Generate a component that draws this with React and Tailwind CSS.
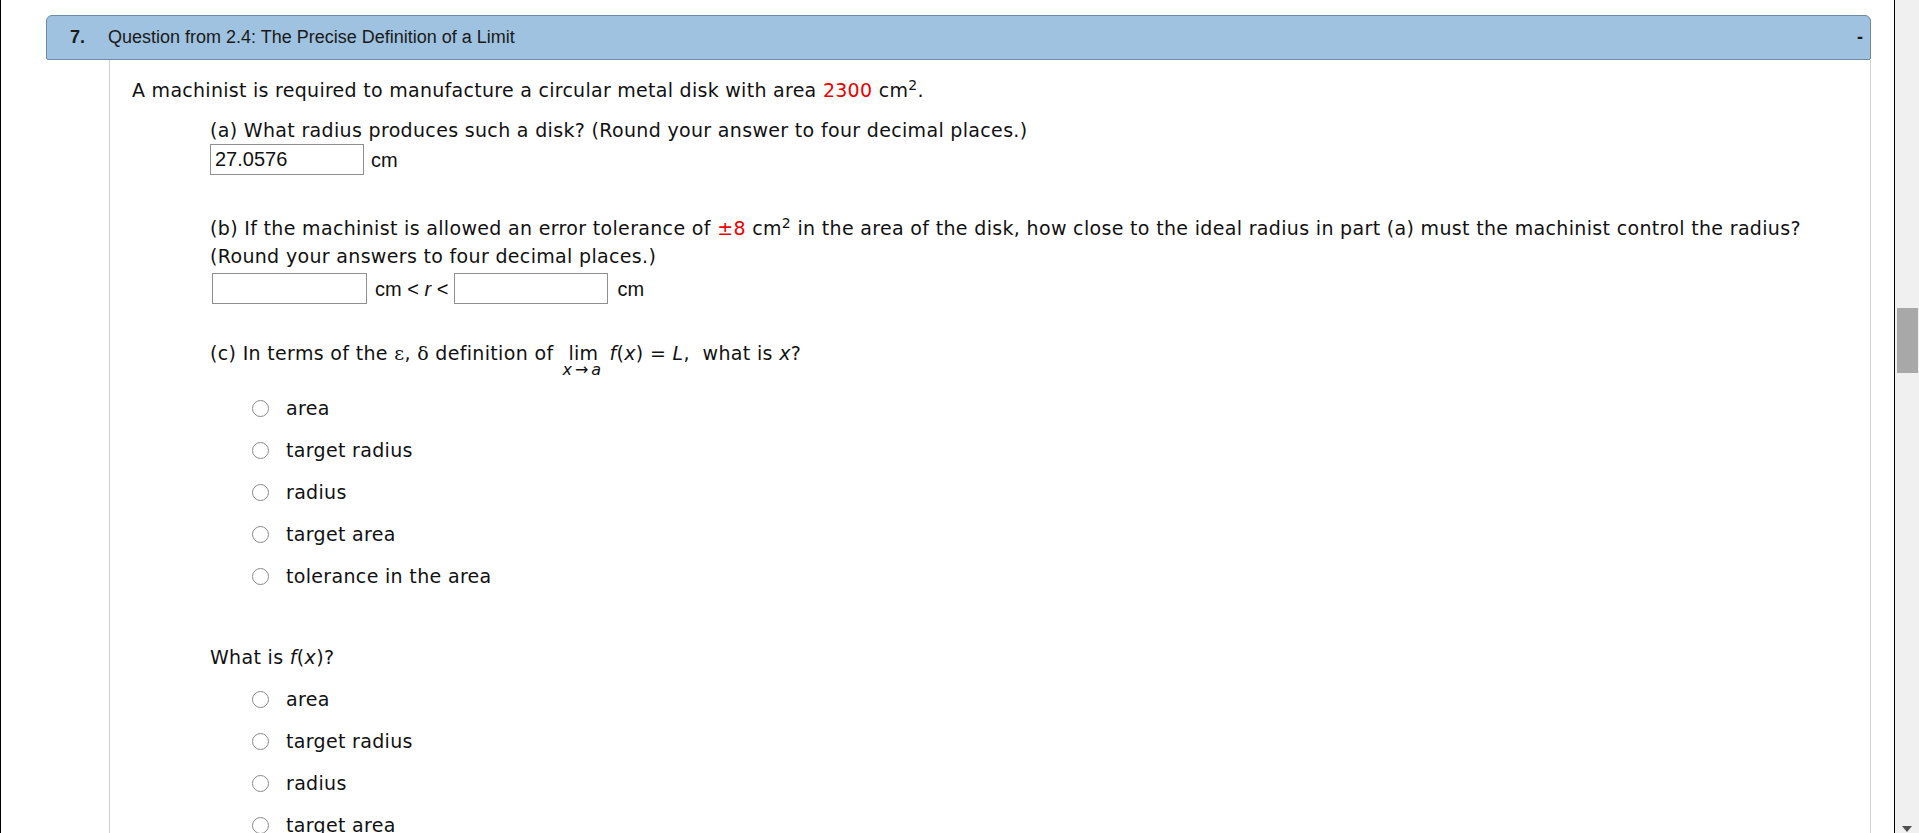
import React from "react";

const choices = ["area", "target radius", "radius", "target area", "tolerance in the area"];

function Radio({ label }) {
  return (
    <div className="flex h-[42px] items-center">
      <span className="ml-[42px] h-[17px] w-[17px] rounded-full border border-[#8a8a8a] bg-white" />
      <span className="ml-[17px]">{label}</span>
    </div>
  );
}

export default function App() {
  return (
    <div className="flex h-[833px] w-full overflow-hidden border-l border-black bg-white text-[#111]">
      <div className="flex min-w-0 flex-1 flex-col pt-[15px] pl-[45px] pr-[23px]">
        {/* question header */}
        <div className="flex h-[45px] shrink-0 items-center rounded-t-[6px] rounded-b-[2px] border border-[#6f8aa6] bg-[#9ec2df] font-['Liberation_Sans',Arial,sans-serif] text-[18px] text-[#1a1a1a]">
          <span className="ml-[23px] w-[38px] font-bold">7.</span>
          <span>Question from 2.4: The Precise Definition of a Limit</span>
          <span className="ml-auto mr-[7px] font-bold">-</span>
        </div>

        {/* question body */}
        <div className="ml-[63px] flex-1 border-x border-[#cfcfcf] pt-[16px] pl-[22px] font-['DejaVu_Sans',Verdana,sans-serif] text-[19px] leading-[28px] tracking-[0.33px]">
          <p className="tracking-[0.28px]">
            A machinist is required to manufacture a circular metal disk with area{" "}
            <span className="text-[#ee0000]">2300</span> cm<sup className="text-[14px]">2</sup>.
          </p>

          <div className="ml-[78px]">
            <p className="mt-[12px]">(a) What radius produces such a disk? (Round your answer to four decimal places.)</p>
            <div className="flex h-[31px] items-center font-['Liberation_Sans',Arial,sans-serif] text-[20px] tracking-normal">
              <input
                readOnly
                value="27.0576"
                className="h-[31px] w-[154px] border border-[#8f8f8f] bg-white px-[4px] text-[20px] outline-none"
              />
              <span className="ml-[7px]">cm</span>
            </div>

            <p className="mt-[39px]">
              (b) If the machinist is allowed an error tolerance of{" "}
              <span className="text-[#ee0000]">±8</span> cm<sup className="text-[14px]">2</sup> in the area of the
              disk, how close to the ideal radius in part (a) must the machinist control the radius?
            </p>
            <p>(Round your answers to four decimal places.)</p>
            <div className="mt-[3px] flex h-[31px] items-center font-['Liberation_Sans',Arial,sans-serif] text-[20px] tracking-normal">
              <input readOnly className="ml-[2px] h-[31px] w-[155px] border border-[#8f8f8f] bg-white outline-none" />
              <span className="ml-[8px] mr-[6px]">
                cm &lt; <i>r</i> &lt;
              </span>
              <input readOnly className="h-[31px] w-[154px] border border-[#8f8f8f] bg-white outline-none" />
              <span className="ml-[9px]">cm</span>
            </div>

            <p className="mt-[35px] h-[28px] whitespace-nowrap">
              (c) In terms of the <span className="font-['DejaVu_Serif',serif]">ε</span>,{" "}
              <span className="font-['DejaVu_Serif',serif]">δ</span> definition of
              <span className="relative ml-[15px] mr-[11px] inline-block">
                lim
                <span className="absolute left-[-6px] top-[23px] whitespace-nowrap text-[16px] leading-[16px] tracking-normal">
                  <i>x</i>
                  <span className="mx-[3px]">→</span>
                  <i>a</i>
                </span>
              </span>
              <i>f</i>(<i>x</i>) = <i>L</i>,&nbsp; what is <i>x</i>?
            </p>

            <div className="mt-[20px]">
              {choices.map((c) => (
                <Radio key={"x" + c} label={c} />
              ))}
            </div>

            <p className="mt-[46px]">
              What is <i>f</i>(<i>x</i>)?
            </p>
            <div className="mt-[7px]">
              {choices.map((c) => (
                <Radio key={"f" + c} label={c} />
              ))}
            </div>
          </div>
        </div>
      </div>

      {/* scrollbar */}
      <div className="flex w-[25px] shrink-0 flex-col items-center border-l border-black bg-[#f0f0f0]">
        <div className="mt-[308px] h-[65px] w-[21px] bg-[#a8a8a8]" />
        <div className="flex-1" />
        <svg width="10" height="6" viewBox="0 0 10 6" className="mb-[1px]">
          <path d="M0 0h10L5 6z" fill="#505050" />
        </svg>
      </div>
    </div>
  );
}
